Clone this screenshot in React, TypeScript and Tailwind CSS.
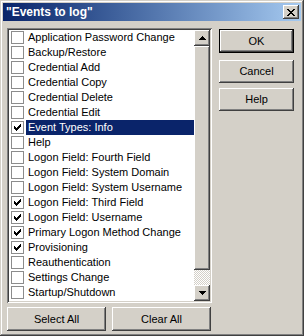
import React from "react";

const items: { label: string; checked: boolean }[] = [
    { label: "Application Password Change", checked: false },
    { label: "Backup/Restore", checked: false },
    { label: "Credential Add", checked: false },
    { label: "Credential Copy", checked: false },
    { label: "Credential Delete", checked: false },
    { label: "Credential Edit", checked: false },
    { label: "Event Types: Info", checked: true },
    { label: "Help", checked: false },
    { label: "Logon Field: Fourth Field", checked: false },
    { label: "Logon Field: System Domain", checked: false },
    { label: "Logon Field: System Username", checked: false },
    { label: "Logon Field: Third Field", checked: true },
    { label: "Logon Field: Username", checked: true },
    { label: "Primary Logon Method Change", checked: true },
    { label: "Provisioning", checked: true },
    { label: "Reauthentication", checked: false },
    { label: "Settings Change", checked: false },
    { label: "Startup/Shutdown", checked: false },
];

const selected = 6;

const raised = "bg-[#d4d0c8] shadow-[inset_-1px_-1px_#404040,inset_1px_1px_#ffffff,inset_-2px_-2px_#808080,inset_2px_2px_#d4d0c8]";

const Check = () => (
    <svg width="7" height="7" viewBox="0 0 7 7" shapeRendering="crispEdges">
        <path d="M6 0h1v3h-1v1h-1v1h-1v1h-1v1h-1v-1h-1v-1h-1v-3h1v1h1v1h1v-1h1v-1h1z" fill="#000" />
    </svg>
);

const Arrow = ({ down }: { down?: boolean }) => (
    <svg width="7" height="4" viewBox="0 0 7 4" shapeRendering="crispEdges">
        {down
            ? <path d="M0 0h7v1h-1v1h-1v1h-1v1h-1v-1h-1v-1h-1v-1h-1z" fill="#000" />
            : <path d="M3 0h1v1h1v1h1v1h1v1h-7v-1h1v-1h1v-1h1z" fill="#000" />}
    </svg>
);

const Button = ({ text, className }: { text: string; className?: string }) => (
    <div className={`${raised} flex items-center justify-center text-[11px] text-black ${className ?? ""}`}>{text}</div>
);

export default function App() {
    return <div className="w-[304px] h-[336px] bg-[#d4d0c8] p-[3px] flex flex-col shadow-[inset_-1px_-1px_#404040,inset_1px_1px_#d4d0c8,inset_-2px_-2px_#808080,inset_2px_2px_#ffffff] font-['Liberation_Sans',Arial,sans-serif] select-none">
        <div className="h-[18px] flex items-center justify-between bg-gradient-to-r from-[#0a246a] to-[#a6caf0] pl-[3px] pr-[2px]">
            <span className="text-white font-bold text-[12px] leading-none">"Events to log"</span>
            <div className={`${raised} w-[16px] h-[14px] flex items-center justify-center`}>
                <svg width="8" height="7" viewBox="0 0 8 7" shapeRendering="crispEdges">
                    <path d="M0 0h2v1h1v1h2v-1h1v-1h2v1h-1v1h-1v1h-1v1h1v1h1v1h1v1h-2v-1h-1v-1h-2v1h-1v1h-2v-1h1v-1h1v-1h1v-1h-1v-1h-1v-1h-1z" fill="#000" />
                </svg>
            </div>
        </div>
        <div className="flex pl-[4px] pt-[7px]">
            <div className="flex flex-col w-[205px]">
                <div className="h-[275px] bg-white p-[2px] flex shadow-[inset_1px_1px_#808080,inset_-1px_-1px_#ffffff,inset_2px_2px_#404040,inset_-2px_-2px_#d4d0c8]">
                    <div className="flex-1 flex flex-col">
                        {items.map((item, i) => (
                            <div key={item.label} className="h-[15px] flex items-center pl-[2px]">
                                <div className="w-[13px] h-[13px] border border-[#8c8c8c] bg-white flex items-center justify-center shrink-0">
                                    {item.checked && <Check />}
                                </div>
                                <div className={`ml-[2px] flex-1 h-[15px] flex items-center pl-[2px] text-[11px] leading-none whitespace-nowrap ${i === selected ? "bg-[#0a246a] text-white" : "text-black"}`}>
                                    {item.label}
                                </div>
                            </div>
                        ))}
                    </div>
                    <div className="w-[16px] flex flex-col">
                        <div className={`${raised} h-[16px] flex items-center justify-center`}><Arrow /></div>
                        <div className={`${raised} h-[224px]`} />
                        <div className="flex-1 bg-[conic-gradient(#ffffff_25%,#d4d0c8_0_50%,#ffffff_0_75%,#d4d0c8_0)] bg-[length:2px_2px]" />
                        <div className={`${raised} h-[16px] flex items-center justify-center`}><Arrow down /></div>
                    </div>
                </div>
                <div className="flex mt-[4px] gap-[6px]">
                    <Button text="Select All" className="w-[99px] h-[24px]" />
                    <Button text="Clear All" className="w-[99px] h-[24px]" />
                </div>
            </div>
            <div className="flex flex-col ml-[7px] w-[75px]">
                <div className="mt-[1px] h-[24px] border border-black">
                    <Button text="OK" className="w-full h-full" />
                </div>
                <Button text="Cancel" className="mt-[7px] h-[23px]" />
                <Button text="Help" className="mt-[5px] h-[23px]" />
            </div>
        </div>
    </div>
}
